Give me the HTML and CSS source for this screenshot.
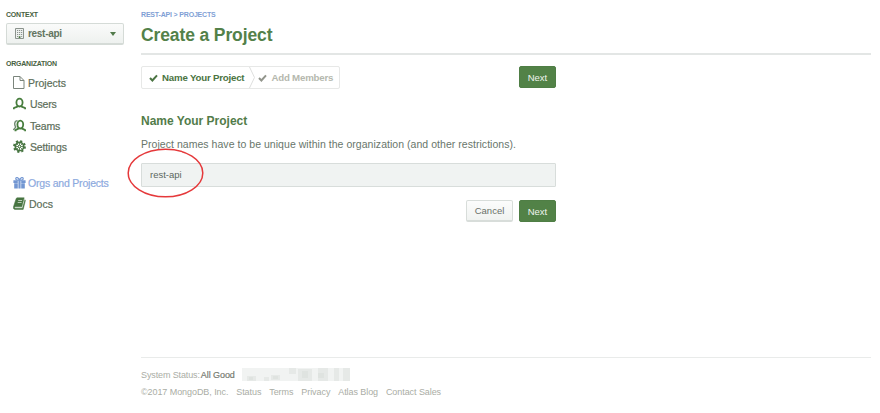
FILE: index.html
```html
<!DOCTYPE html>
<html lang="en">
<head>
<meta charset="utf-8">
<title>Create a Project</title>
<link rel="stylesheet" href="styles.css">
</head>
<body>
<div class="app">
  <aside class="sidebar">
    <h2 class="label">CONTEXT</h2>
    <button class="context">
      <svg class="building" viewBox="0 0 9 11"><path d="M.5.5h8v10h-8z" fill="#eef1ef" stroke="#8b938d"/><path d="M2 2.500h1.200M4 2.500h1.200M6 2.500h1.200M2 4.500h1.200M4 4.500h1.200M6 4.500h1.200M2 6.500h1.200M4 6.500h1.200M6 6.500h1.200M2 8.500h1M6.200 8.500h1" stroke="#8b938d"/><path d="M3.700 8.200h1.700V10H3.700z" fill="#47753e"/></svg>
      <span>rest-api</span>
      <svg class="caret" viewBox="0 0 6 4"><path d="M0 0h6L3 4z" fill="#517a4a"/></svg>
    </button>
    <h2 class="label org">ORGANIZATION</h2>
    <nav>
      <a class="item projects"><svg viewBox="0 0 13 14"><path d="M.5.5h6.500l4 4v8H.5zM7 .5v4h4" fill="none" stroke="#7b857c"/></svg><span>Projects</span></a>
      <a class="item users"><svg viewBox="0 0 13 14"><path d="M.8 12.300v-1.100c1-.9 3.200-.8 4.200-2.200M8 9c1 1.400 3.200 1.300 4.200 2.200v1.100" fill="none" stroke="#477d3d" stroke-width="1.900"/><ellipse cx="6.500" cy="5.600" rx="3.100" ry="3.900" fill="none" stroke="#477d3d" stroke-width="1.800"/></svg><span>Users</span></a>
      <a class="item teams"><svg viewBox="0 0 13 14"><path d="M4.500 1.600C1.500 1.500 1 5.500 2.700 8 2.200 9.200.9 9.500.6 11" fill="none" stroke="#6f8970" stroke-width="1.400"/><path d="M2.500 12.300v-1.100c1-.9 2.500-.8 3.400-2.200M8.700 9c.8 1.400 2.500 1.300 3.500 2.200v1.100" fill="none" stroke="#477d3d" stroke-width="1.900"/><ellipse cx="7.300" cy="5.600" rx="2.900" ry="3.900" fill="none" stroke="#477d3d" stroke-width="1.800"/></svg><span>Teams</span></a>
      <a class="item settings"><svg viewBox="0 0 13 14"><circle cx="6.500" cy="6.500" r="5.400" fill="none" stroke="#477541" stroke-width="2" stroke-dasharray="2.120"/><circle cx="6.500" cy="6.500" r="4.200" fill="none" stroke="#477541" stroke-width="1.700"/><path d="M6.500 2.500v8M2.500 6.500h8M3.700 3.700l5.600 5.600M9.300 3.700L3.700 9.300" stroke="#477541" stroke-width=".8"/><circle cx="6.500" cy="6.500" r="1.300" fill="#fff" stroke="#477541"/></svg><span>Settings</span></a>
      <a class="item orgs"><svg viewBox="0 0 13 14"><path d="M.4 4.300h4.400V7H.4zM8.200 4.300h4.400V7H8.200zM5.400 4.300h2.200v8.200H5.400zM1.200 7.200h3.600v5.300H1.200zM8.200 7.200h3.600v5.300H8.200z" fill="#7296d2"/><path d="M6.500 4C5.500 1.200 2.800.8 2.800 2.600S4.800 4.100 6.500 4.100s3.700.3 3.700-1.500S7.500 1.200 6.500 4z" fill="none" stroke="#7296d2" stroke-width="1.200"/></svg><span>Orgs and Projects</span></a>
      <a class="item docs"><svg viewBox="0 0 13 14"><path d="M4 .8h7.200L8.800 9.800H2.700c-1.600 0-1.500 1.400-.1 1.400h6.900l2.400-8.500.5.900-2.200 8.800H2C.2 12.400 0 10.500.7 9L3 2Q3.300 1 4 .8z" fill="#477541" stroke="#477541" stroke-width=".5"/><path d="M5.200 3.500h3.900M4.700 5.500h3.900" stroke="#d5e0d3" stroke-width=".8"/></svg><span>Docs</span></a>
    </nav>
  </aside>
  <main class="main">
    <div class="crumbs">REST-API &gt; PROJECTS</div>
    <header><h1>Create a Project</h1></header>
    <div class="form">
      <div class="toolbar">
        <ol class="steps">
          <li class="active"><svg class="check" viewBox="0 0 9 8"><path d="M1 4l2.400 2.500L8 1.300" fill="none" stroke="currentColor" stroke-width="2"/></svg><span>Name Your Project</span></li>
          <li class="divider"><svg viewBox="0 0 6 21"><path d="M.5 0l5 10.500L.5 21" fill="none" stroke="#dedfde"/></svg></li>
          <li><svg class="check" viewBox="0 0 9 8"><path d="M1 4l2.400 2.500L8 1.300" fill="none" stroke="#92958c" stroke-width="2"/></svg><span>Add Members</span></li>
        </ol>
        <button class="btn primary">Next</button>
      </div>
      <h2 class="section">Name Your Project</h2>
      <p class="hint">Project names have to be unique within the organization (and other restrictions).</p>
      <div class="field">
        <input type="text" value="rest-api" aria-label="Project name">
        <svg class="ring" viewBox="0 0 77 50"><ellipse cx="38.500" cy="25" rx="37.300" ry="23.800" fill="none" stroke="#e5393b" stroke-width="1.500"/></svg>
      </div>
      <div class="actions"><button class="btn cancel">Cancel</button><button class="btn primary">Next</button></div>
    </div>
    <footer>
      <div class="status"><span class="sys">System Status:</span><b>All Good</b>
        <svg class="mosaic" viewBox="0 0 109 14"><path d="M0 0h108v13H0z" fill="#f1f3f2"/><path d="M5 8h9v5H5zM22 9h5v4h-5zM29 7h9v5h-9zM47 0h7v6h-7zM56 1h14v12H56zM76 0h10v13H76zM92 0h5v13h-5zM101 0h7v13h-7z" fill="#e6e9e7"/><path d="M7 9h4v3H7zM31 8h5v3h-5zM60 3h6v7h-6zM76 5h6v5h-6z" fill="#dfe3e0"/></svg>
      </div>
      <div class="links"><span>©2017 MongoDB, Inc.</span><a>Status</a><a>Terms</a><a>Privacy</a><a>Atlas Blog</a><a>Contact Sales</a></div>
    </footer>
  </main>
</div>
</body>
</html>
```
FILE: styles.css
```css
* { box-sizing: border-box; }
body { margin: 0; background: #fff; color: #5c6b60; font-family: "Liberation Sans", Arial, sans-serif; font-size: 10px; }
h1, h2, p, ol { margin: 0; padding: 0; }
button, input { font-family: inherit; }
svg { display: block; flex: none; }
.app { display: flex; height: 413px; }
.sidebar { width: 141px; padding: 9px 0 0 6px; }
.label { font-size: 7px; line-height: 11px; letter-spacing: -.22px; color: #47613f; font-weight: 700; }
.context { display: flex; align-items: center; width: 118px; height: 22px; margin-top: 3px; padding: 0 7px 0 8px; border: 1px solid #d5dbd7; border-bottom-width: 2px; border-radius: 2px; background: linear-gradient(#fafbfa, #eef1ef); color: #62745f; font-size: 10px; font-weight: 700; letter-spacing: -.3px; }
.building { width: 9px; height: 11px; margin-right: 4px; }
.caret { width: 6px; height: 4px; margin-left: auto; }
.org { margin-top: 13px; }
nav { padding: 3px 0 0 7px; }
.item { display: flex; align-items: center; gap: 3px; height: 21.500px; font-size: 10.500px; color: #5c6e59; -webkit-text-stroke: .2px; }
.item svg { width: 13px; height: 14px; }
.projects, .orgs { gap: 2px; }
.users, .teams, .settings { gap: 4px; }
.users { letter-spacing: -.15px; }
.teams, .settings { letter-spacing: -.15px; }
.orgs { margin-top: 14px; color: #8daade; letter-spacing: -.2px; }
.main { display: flex; flex-direction: column; width: 730px; padding-top: 10px; }
.crumbs { font-size: 7px; line-height: 10px; font-weight: 700; letter-spacing: -.18px; color: #7f9fd5; }
header { height: 35px; padding-top: 4px; border-bottom: 2px solid #e3e6e5; }
h1 { font-size: 17.500px; line-height: 23px; letter-spacing: -.12px; color: #538149; }
.form { width: 415px; }
.toolbar { display: flex; justify-content: space-between; margin-top: 11px; }
.steps { display: flex; align-items: center; width: 199px; height: 23px; padding-left: 7px; list-style: none; border: 1px solid #e7e8e7; border-radius: 2px; font-size: 9.700px; font-weight: 700; letter-spacing: -.2px; color: #b5b8ae; }
.steps li { display: flex; align-items: center; gap: 4px; white-space: nowrap; }
.steps .active { color: #4a7442; }
.check { width: 9px; height: 8px; }
.steps .divider { margin: 0 3px 0 5px; }
.divider svg { width: 6px; height: 21px; }
.btn { height: 22px; padding: 0; border-radius: 2px; font-size: 9.500px; text-align: center; }
.primary { width: 37px; border: 1px solid #4f7e45; background: #528247; color: #f0f4ee; }
.cancel { width: 47px; border: 1px solid #d8ddda; border-bottom-width: 2px; background: linear-gradient(#fcfcfc, #f0f3f1); color: #697069; }
.section { margin-top: 24px; font-size: 12px; line-height: 16px; color: #527c49; }
.hint { margin-top: 8px; font-size: 10.500px; line-height: 14px; letter-spacing: .04px; white-space: nowrap; color: #68766b; }
.field { position: relative; margin-top: 12px; height: 24px; }
.field input { display: block; width: 415px; height: 24px; padding: 0 8px 1px; border: 1px solid #d8dddb; border-radius: 1px; background: #f0f3f2; color: #5b675e; font-size: 9.500px; outline: 0; }
.ring { position: absolute; left: -14px; top: -15.500px; width: 77px; height: 50px; }
.actions { display: flex; justify-content: flex-end; gap: 6px; margin-top: 13px; }
footer { margin-top: auto; height: 56px; border-top: 1px solid #e9ebea; color: #aaada5; font-size: 9px; letter-spacing: -.07px; }
.status { display: flex; align-items: center; height: 14px; margin-top: 10px; }
.sys { letter-spacing: -.12px; }
.status b { margin-left: 1px; font-weight: 400; color: #777b72; -webkit-text-stroke: .2px; }
.mosaic { width: 109px; height: 14px; margin-left: 7px; }
.links { display: flex; gap: 7.900px; height: 14px; margin-top: 3px; line-height: 14px; white-space: nowrap; }
```
